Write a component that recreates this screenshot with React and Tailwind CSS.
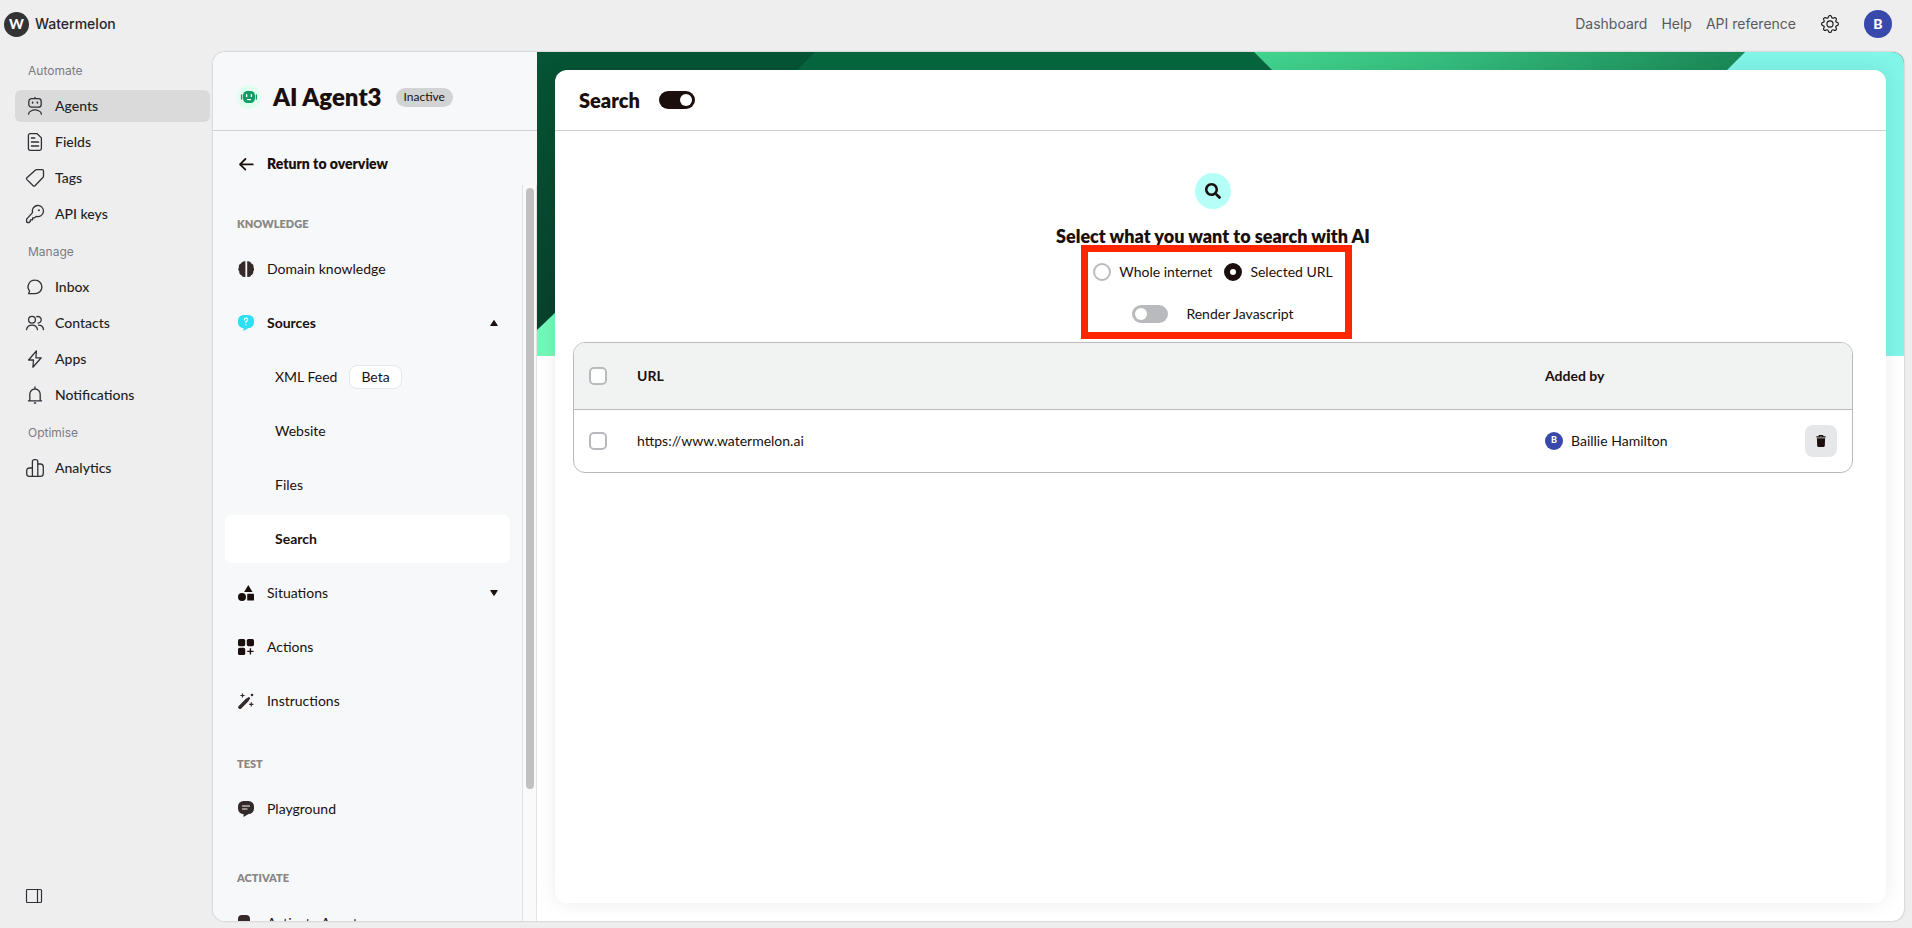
import React from "react";
import { FaSearch } from "react-icons/fa";
import { BsGear } from "react-icons/bs";

function LineIcon({ children }) {
  return (
    <svg
      className="size-5 shrink-0"
      viewBox="0 0 20 20"
      fill="none"
      stroke="#303036"
      strokeWidth="1.3"
      strokeLinecap="round"
      strokeLinejoin="round"
      aria-hidden="true"
    >
      {children}
    </svg>
  );
}

function SolidIcon({ children }) {
  return (
    <svg className="size-4 shrink-0" viewBox="0 0 16 16" fill="#1a0f0d" aria-hidden="true">
      {children}
    </svg>
  );
}

const navIcons = {
  agents: (
    <LineIcon>
      <rect x="3.8" y="2.6" width="12.4" height="8.6" rx="2.8" />
      <path d="M10 2.4V1.4" />
      <path d="M7.6 6.4v.4M12.4 6.4v.4" strokeWidth="1.7" />
      <path d="M3.6 18.2c0-1.7.9-2.7 2.3-3.2a9 9 0 0 1 8.2 0c1.4.5 2.3 1.5 2.3 3.2" />
    </LineIcon>
  ),
  fields: (
    <LineIcon>
      <path d="M5.2 1.7h7l4.2 4.2v10.6a1.8 1.8 0 0 1-1.8 1.8H5.2a1.8 1.8 0 0 1-1.8-1.8v-13a1.8 1.8 0 0 1 1.8-1.8Z" />
      <path d="M6.4 6h3.4M6.4 10h7.2M6.4 14h7.2" />
    </LineIcon>
  ),
  tags: (
    <LineIcon>
      <path d="M11.6 1.6h5.6a1.3 1.3 0 0 1 1.3 1.3v5.3a1.5 1.5 0 0 1-.4 1L10 17.7a1.3 1.3 0 0 1-1.8 0L1.9 11.6a1.3 1.3 0 0 1 0-1.8l8.6-7.7a1.6 1.6 0 0 1 1.1-.5Z" />
    </LineIcon>
  ),
  keys: (
    <LineIcon>
      <path d="M7.5 8.6A5.6 5.6 0 1 1 11.2 12.4l-1.7 1.4H7.6v2H5.4v1.5l-1.2 1.2H2.4a.8.8 0 0 1-.8-.8v-2.6Z" />
      <circle cx="13.9" cy="6.3" r="1" fill="#303036" stroke="none" />
    </LineIcon>
  ),
  inbox: (
    <LineIcon>
      <path d="M10.2 3.2a6.7 6.7 0 1 1-.1 13.5H3.6l1-2.6A6.7 6.7 0 0 1 10.2 3.2Z" />
    </LineIcon>
  ),
  contacts: (
    <LineIcon>
      <circle cx="7" cy="6.8" r="3.4" />
      <path d="M1.5 16.6a5.6 5.6 0 0 1 11 0M11.8 3.7a3.3 3.3 0 1 1 1.2 6.4M13.6 12.2a5 5 0 0 1 4.9 4.4" />
    </LineIcon>
  ),
  apps: (
    <LineIcon>
      <path d="M11.4 1.8 3.6 11h4.9l-.6 7.2 8.3-9.4h-5.3Z" />
    </LineIcon>
  ),
  bell: (
    <LineIcon>
      <path d="M4.8 15.6V9.2a5.2 5.2 0 0 1 10.4 0v6.4M3.4 15.8h13.2M10 3.6V2M9.4 18h1.2" />
    </LineIcon>
  ),
  analytics: (
    <LineIcon>
      <path d="M7.4 18.3V3.6a1.9 1.9 0 0 1 1.9-1.9h1.6a1.9 1.9 0 0 1 1.9 1.9v14.7" />
      <path d="M12.8 6h2.6a2.9 2.9 0 0 1 2.9 2.9v6.5a2.9 2.9 0 0 1-2.9 2.9H4.2a2.5 2.5 0 0 1-2.5-2.5v-3.3a2.5 2.5 0 0 1 2.5-2.5h3.2" />
    </LineIcon>
  ),
};

const navSections = [
  {
    title: "Automate",
    items: [
      { label: "Agents", icon: "agents", active: true },
      { label: "Fields", icon: "fields" },
      { label: "Tags", icon: "tags" },
      { label: "API keys", icon: "keys" },
    ],
  },
  {
    title: "Manage",
    items: [
      { label: "Inbox", icon: "inbox" },
      { label: "Contacts", icon: "contacts" },
      { label: "Apps", icon: "apps" },
      { label: "Notifications", icon: "bell" },
    ],
  },
  { title: "Optimise", items: [{ label: "Analytics", icon: "analytics" }] },
];

function TopBar() {
  return (
    <header className="flex h-12 shrink-0 items-center justify-between pl-1 pr-5 font-['Inter',sans-serif]">
      <a href="#home" className="flex items-center gap-1.5 text-sm font-medium text-[#26262b]">
        <span className="flex size-[25px] items-center justify-center rounded-full bg-[#333] font-['Lato',sans-serif] text-sm font-black text-white">
          W
        </span>
        Watermelon
      </a>
      <nav className="flex items-center gap-[14px] text-sm text-[#5a5a5e]">
        <a href="#dashboard">Dashboard</a>
        <a href="#help">Help</a>
        <a href="#api">API reference</a>
        <button type="button" aria-label="Settings" className="mx-[10px] flex size-5 items-center justify-center text-[#17171a]">
          <BsGear size={18} />
        </button>
        <button
          type="button"
          className="flex size-7 items-center justify-center rounded-full bg-[#3949ab] font-['Lato',sans-serif] text-sm font-black text-white"
        >
          B
        </button>
      </nav>
    </header>
  );
}

function AppNav() {
  return (
    <nav className="flex w-[213px] shrink-0 flex-col pl-[15px] pr-[3px] pt-[7px]">
      <div className="flex flex-1 flex-col gap-1.5">
        {navSections.map((section) => (
          <section key={section.title}>
            <h2 className="mb-[3px] flex h-8 items-center pl-[13px] font-['Inter',sans-serif] text-xs text-[#7b7b87]">
              {section.title}
            </h2>
            <ul className="flex flex-col gap-1">
              {section.items.map((item) => (
                <li key={item.label}>
                  <a
                    href="#"
                    aria-current={item.active ? "page" : undefined}
                    className={
                      item.active
                        ? "flex h-8 items-center gap-[10px] rounded-md bg-[#dadada] pl-[10px] text-sm font-medium text-[#1f1f24]"
                        : "flex h-8 items-center gap-[10px] rounded-md pl-[10px] text-sm font-medium text-[#1f1f24]"
                    }
                  >
                    {navIcons[item.icon]}
                    {item.label}
                  </a>
                </li>
              ))}
            </ul>
          </section>
        ))}
      </div>
      <button type="button" aria-label="Toggle sidebar" className="mb-[22px] ml-[10px] flex size-5 items-center">
        <svg viewBox="0 0 18 16" className="h-4 w-[18px]" fill="none" stroke="#303036" strokeWidth="1.2">
          <rect x="1.5" y="1.5" width="15" height="13" rx="1" />
          <path d="M12.5 1.5v13" />
        </svg>
      </button>
    </nav>
  );
}

function Row({ icon, label, bold, caret }) {
  return (
    <a href="#" className="flex h-12 items-center gap-[13px] rounded-md pl-[13px] pr-[11px] text-sm text-[#1a0f0d]">
      {icon}
      <span className={bold ? "flex-1 font-bold" : "flex-1"}>{label}</span>
      {caret && (
        <svg viewBox="0 0 10 8" className="h-2 w-[10px]" fill="#1a0f0d" stroke="#1a0f0d" strokeLinejoin="round" aria-hidden="true">
          {caret === "up" ? <path d="M5 1.5 8.3 6.5H1.7Z" /> : <path d="M5 6.5 8.3 1.5H1.7Z" />}
        </svg>
      )}
    </a>
  );
}

function SubRow({ label, active, badge }) {
  return (
    <a
      href="#"
      className={
        active
          ? "flex h-12 items-center gap-3 rounded-md bg-white pl-[50px] text-sm font-bold text-[#1a0f0d]"
          : "flex h-12 items-center gap-3 rounded-md pl-[50px] text-sm text-[#1a0f0d]"
      }
    >
      {label}
      {badge && (
        <span className="flex h-6 items-center rounded-lg border border-[#e6e7e9] bg-white px-[11px]">{badge}</span>
      )}
    </a>
  );
}

function GroupTitle({ children }) {
  return (
    <h3 className="mb-[11px] flex h-5 items-center pl-3 text-[11px] font-extrabold text-[#8a8784]">{children}</h3>
  );
}

function AgentPanel() {
  return (
    <aside className="flex w-[324px] shrink-0 flex-col bg-[#f7f8fa]">
      <div className="flex h-[79px] shrink-0 items-center border-b border-[#cfd0d2] pl-6 pt-3">
        <svg viewBox="0 0 24 24" className="size-6" aria-hidden="true">
          <circle cx="12" cy="12" r="12" fill="#e0fdee" />
          <rect x="6" y="6" width="12" height="12" rx="4.5" fill="#0f9d63" />
          <path d="M4.6 10v4M19.4 10v4" stroke="#0f9d63" strokeWidth="1.4" strokeLinecap="round" />
          <path d="M9.6 9.8v1.6M14.4 9.8v1.6M10.6 14.6h2.8" stroke="#fff" strokeWidth="1.4" strokeLinecap="round" />
        </svg>
        <h1 className="ml-3 text-2xl font-extrabold text-[#1a0f0d]">AI Agent3</h1>
        <span className="ml-[14px] flex h-[19px] items-center rounded-full bg-[#d2d3d5] px-2 text-xs text-[#1a0f0d]">
          Inactive
        </span>
      </div>
      <a href="#" className="mt-[11px] flex h-[43px] shrink-0 items-center gap-[13px] pl-[25px] text-sm font-extrabold text-[#1a0f0d]">
        <svg viewBox="0 0 16 16" className="size-4" fill="none" stroke="#1a0f0d" strokeWidth="1.8" strokeLinecap="round" strokeLinejoin="round" aria-hidden="true">
          <path d="M14.8 8.4H2M7.4 3 2 8.4l5.4 5.2" />
        </svg>
        Return to overview
      </a>
      <div className="flex min-h-0 flex-1">
        <div className="min-w-0 flex-1 overflow-hidden pl-3 pr-3 pt-[29px]">
          <section>
            <GroupTitle>KNOWLEDGE</GroupTitle>
            <div className="flex flex-col gap-1.5">
              <Row
                label="Domain knowledge"
                icon={
                  <SolidIcon>
                    <path
                      fill="#332a29"
                      d="M7.4.3v15.4c-2 .6-3.7-.2-4-1.8C1.7 13.6 1 12 1.4 10.7.1 9.5-.1 7.4 1 6.2.5 4.5 1.4 2.9 3 2.5 3.5.9 5.5-.2 7.4.3ZM9.2.3v15.4c2 .6 3.7-.2 4-1.8 1.5-.3 2.3-1.9 1.9-3.2 1.200-1.200 1.300-3.300.3-4.500.5-1.700-.4-3.300-2-3.700C12.900.9 11.100-.2 9.200.3Z"
                    />
                  </SolidIcon>
                }
              />
              <Row
                bold
                caret="up"
                label="Sources"
                icon={
                  <SolidIcon>
                    <path fill="#2fdff2" d="M5.500 0h5A5.500 5.500 0 0 1 16 5.500v2a5.500 5.500 0 0 1-5.500 5.500L5.500 16v-3A5.500 5.500 0 0 1 0 7.500v-2A5.500 5.500 0 0 1 5.500 0Z" />
                    <path d="M6.400 4.800a1.600 1.600 0 1 1 2.400 1.300c-.6.300-.9.600-.9 1.300M7.900 9.600v.1" fill="none" stroke="#fff" strokeWidth="1.300" strokeLinecap="round" />
                  </SolidIcon>
                }
              />
              <SubRow label="XML Feed" badge="Beta" />
              <SubRow label="Website" />
              <SubRow label="Files" />
              <SubRow label="Search" active />
              <Row
                caret="down"
                label="Situations"
                icon={
                  <SolidIcon>
                    <path d="M10.300 0 14.500 7H6.100Z" />
                    <circle cx="4" cy="12" r="4" />
                    <rect x="9.200" y="8.800" width="6.800" height="6.800" rx=".6" />
                  </SolidIcon>
                }
              />
              <Row
                label="Actions"
                icon={
                  <SolidIcon>
                    <rect x="0" y="0" width="7.200" height="7.200" rx="1.600" />
                    <rect x="8.800" y="0" width="7.200" height="7.200" rx="1.600" />
                    <rect x="0" y="8.800" width="7.200" height="7.200" rx="1.600" />
                    <path d="M12.400 9.200v6.400M9.200 12.400h6.400" stroke="#1a0f0d" strokeWidth="1.400" />
                  </SolidIcon>
                }
              />
              <Row
                label="Instructions"
                icon={
                  <SolidIcon>
                    <path d="M2 14.200 8.900 7.200" stroke="#332a29" strokeWidth="3.600" strokeLinecap="round" />
                    <path d="m10.300 5.800.5-.5" stroke="#332a29" strokeWidth="2.600" strokeLinecap="round" />
                    <path d="M4.500.4v4.200M2.400 2.500h4.200M13.300 9.300v4.200M11.200 11.400h4.200" stroke="#332a29" strokeWidth="1.200" />
                    <circle cx="14" cy="2" r="1.300" fill="#332a29" />
                  </SolidIcon>
                }
              />
            </div>
          </section>
          <section className="mt-[29px]">
            <GroupTitle>TEST</GroupTitle>
            <Row
              label="Playground"
              icon={
                <SolidIcon>
                  <path fill="#332a29" d="M5.500 0h5A5.500 5.500 0 0 1 16 5.500v2a5.500 5.500 0 0 1-5.500 5.500L5.500 16v-3A5.500 5.500 0 0 1 0 7.500v-2A5.500 5.500 0 0 1 5.500 0Z" />
                  <path d="M4.500 5h7M4.500 8H9" stroke="#fff" strokeWidth="1.200" strokeLinecap="round" />
                </SolidIcon>
              }
            />
          </section>
          <section className="mt-[35px]">
            <GroupTitle>ACTIVATE</GroupTitle>
            <Row
              label="Activate Agent"
              icon={
                <SolidIcon>
                  <rect x="0" y="0" width="12" height="11" rx="4" fill="#332a29" />
                </SolidIcon>
              }
            />
          </section>
        </div>
        <div className="w-[15px] shrink-0 border-x border-[#e3e3e3] bg-[#fafafa] px-[3px] pt-[3px]">
          <div className="h-[82%] w-2 rounded-full bg-[#c1c1c1]" />
        </div>
      </div>
    </aside>
  );
}

function Banner() {
  return (
    <svg
      className="absolute inset-x-0 top-0 h-[304px] w-full"
      viewBox="0 0 1367 304"
      preserveAspectRatio="none"
      aria-hidden="true"
    >
      <defs>
        <linearGradient id="deep" x1="0" y1="0" x2="0" y2="1">
          <stop offset="0" stopColor="#045535" />
          <stop offset="1" stopColor="#08412c" />
        </linearGradient>
        <linearGradient id="mint" gradientUnits="userSpaceOnUse" x1="720" y1="0" x2="1208" y2="0">
          <stop offset="0" stopColor="#42d38f" />
          <stop offset="0.35" stopColor="#37c080" />
          <stop offset="1" stopColor="#1a8857" />
        </linearGradient>
      </defs>
      <rect width="1367" height="304" fill="url(#deep)" />
      <path d="M278 0H717L1021 304H0V278Z" fill="#07673f" />
      <path d="M0 0H278L0 278Z" fill="url(#deep)" />
      <path d="M717 0H1208L904 304H1021Z" fill="url(#mint)" />
      <path d="M1208 0H1367V304H904Z" fill="#80f5e8" />
      <path d="M0 278 18 261V304H0Z" fill="#72f8b9" />
    </svg>
  );
}

const toggleBase =
  "relative h-[18px] w-9 shrink-0 appearance-none rounded-full bg-[#b9babe] before:absolute before:left-[3px] before:top-[3px] before:size-3 before:rounded-full before:bg-white checked:bg-[#1a0f0d] checked:before:left-[21px]";
const radioBase =
  "size-[18px] shrink-0 appearance-none rounded-full border-2 border-[#b9babe] bg-white checked:border-[6px] checked:border-[#1a0f0d]";
const checkBase =
  "block size-[18px] appearance-none rounded-[5px] border-2 border-[#b9babe] bg-white checked:bg-[#1a0f0d]";

function UrlTable() {
  return (
    <div className="overflow-hidden rounded-xl border border-[#b9babe]">
      <table className="w-full table-fixed text-left text-sm text-[#1a0f0d]">
        <colgroup>
          <col className="w-[63px]" />
          <col />
          <col className="w-[260px]" />
          <col className="w-[47px]" />
        </colgroup>
        <thead className="border-b border-[#b9babe] bg-[#f1f3f3]">
          <tr className="h-[66px]">
            <th className="pl-[15px]">
              <input type="checkbox" aria-label="Select all URLs" className={checkBase} />
            </th>
            <th className="font-bold">URL</th>
            <th className="font-bold">Added by</th>
            <th aria-label="Delete" />
          </tr>
        </thead>
        <tbody>
          <tr className="h-[63px]">
            <td className="pl-[15px]">
              <input type="checkbox" aria-label="Select https://www.watermelon.ai" className={checkBase} />
            </td>
            <td>https://www.watermelon.ai</td>
            <td>
              <div className="flex items-center gap-2">
                <span className="flex size-[18px] items-center justify-center rounded-full bg-[#3949ab] text-[9px] font-black text-white">
                  B
                </span>
                Baillie Hamilton
              </div>
            </td>
            <td>
              <button type="button" aria-label="Delete URL" className="flex size-8 items-center justify-center rounded-lg bg-[#e6e7e9]">
                <svg viewBox="0 0 12 12" className="size-3" fill="#1a0f0d" aria-hidden="true">
                  <path d="M3.500 1.200C3.600.5 4 0 4.700 0h2.600c.7 0 1.100.5 1.200 1.200H10.600v1.200H1.400V1.200ZM4.700 1.200h2.600V.9H4.700ZM1.900 3.300h8.200l-.3 7.500c0 .7-.5 1.200-1.200 1.200H3.400c-.7 0-1.200-.5-1.200-1.200Z" />
                </svg>
              </button>
            </td>
          </tr>
        </tbody>
      </table>
    </div>
  );
}

function SearchCard() {
  return (
    <section className="relative flex flex-1 flex-col rounded-xl bg-white shadow-[0_0_20px_rgba(0,0,0,0.08)]">
      <div className="flex h-[61px] shrink-0 items-center gap-[19px] border-b border-[#cfd0d2] pl-6">
        <label htmlFor="search-enabled" className="text-xl font-extrabold text-[#1a0f0d]">
          Search
        </label>
        <input id="search-enabled" type="checkbox" role="switch" defaultChecked className={toggleBase} />
      </div>
      <div className="flex flex-col pl-[18px] pr-[33px] pt-[42px]">
        <div className="flex flex-col items-center">
          <span className="flex size-9 items-center justify-center rounded-full bg-[#b5fff8] text-[#1a0f0d]">
            <FaSearch size={16} />
          </span>
          <h2 className="mt-[13px] text-lg font-extrabold leading-7 text-[#1a0f0d]">
            Select what you want to search with AI
          </h2>
          <fieldset className="relative mb-[18px] mt-3 flex flex-col items-center gap-[22px] text-sm text-[#1a0f0d]">
            <div className="flex items-center gap-3">
              <label className="flex items-center gap-2">
                <input type="radio" name="scope" className={radioBase} />
                Whole internet
              </label>
              <label className="flex items-center gap-2">
                <input type="radio" name="scope" defaultChecked className={radioBase} />
                Selected URL
              </label>
            </div>
            <label className="flex items-center gap-[18px]">
              <input type="checkbox" role="switch" className={toggleBase} />
              Render Javascript
            </label>
            <span
              aria-hidden="true"
              className="pointer-events-none absolute -bottom-[15px] -left-3 -right-[19px] -top-[17px] border-[7px] border-[#ff2600]"
            />
          </fieldset>
        </div>
        <UrlTable />
      </div>
    </section>
  );
}

export default function App() {
  return (
    <div className="flex h-screen flex-col overflow-hidden bg-[#eee] font-['Lato',sans-serif]">
      <TopBar />
      <div className="flex min-h-0 flex-1">
        <AppNav />
        <div className="mb-[7px] mr-2 mt-1 flex min-w-0 flex-1 overflow-hidden rounded-xl bg-white shadow-[0_0_2px_rgba(0,0,0,0.3)]">
          <AgentPanel />
          <main className="relative flex min-w-0 flex-1 flex-col p-[18px]">
            <Banner />
            <SearchCard />
          </main>
        </div>
      </div>
    </div>
  );
}
